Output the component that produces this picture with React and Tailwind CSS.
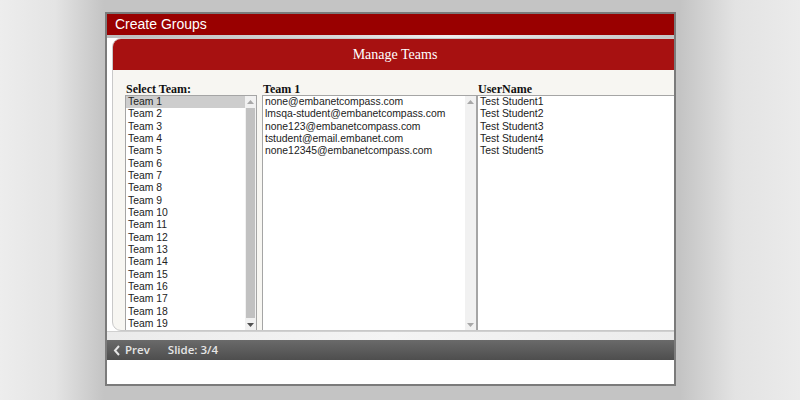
import React from "react";

const teams = Array.from({ length: 19 }, (_, i) => `Team ${i + 1}`);
const emails = [
    "none@embanetcompass.com",
    "lmsqa-student@embanetcompass.com",
    "none123@embanetcompass.com",
    "tstudent@email.embanet.com",
    "none12345@embanetcompass.com",
];
const students = ["Test Student1", "Test Student2", "Test Student3", "Test Student4", "Test Student5"];

const Arrow = ({ up, color }) => (
    <svg width="7" height="4" viewBox="0 0 7 4">
        {up ? <polygon points="0,4 7,4 3.5,0" fill={color} /> : <polygon points="0,0 7,0 3.5,4" fill={color} />}
    </svg>
);

const ScrollBar = ({ thumb }) => (
    <div className="w-[11px] shrink-0 flex flex-col bg-[#f1f1f1]">
        <div className="h-[11px] flex items-center justify-center">
            <Arrow up color="#a8a8a8" />
        </div>
        <div className="flex-1 px-[1px] py-[1px]">
            {thumb && <div className="h-[210px] bg-[#c1c1c1]"></div>}
        </div>
        <div className="h-[11px] flex items-center justify-center">
            <Arrow color={thumb ? "#505050" : "#a8a8a8"} />
        </div>
    </div>
);

const Row = ({ text, selected }) => (
    <div className={`h-[12.33px] leading-[12.33px] pl-[2px] whitespace-nowrap ${selected ? "bg-[#cdcdcd]" : ""}`}>
        {text}
    </div>
);

const Label = ({ children }) => (
    <div className="h-[25px] flex items-end pl-[1px] text-[12px] leading-[12px] font-bold text-[#111] font-['Liberation_Serif',serif]">
        {children}
    </div>
);

export default function App() {
    return (
        <div className="w-[800px] h-[400px] overflow-hidden pt-[12px] pl-[105px] bg-[linear-gradient(to_right,#ededed_0px,#e4e4e4_55px,#c4c4c4_104px,#c4c4c4_680px,#e3e3e3_735px,#ebebeb_800px)]">
            <div className="w-[571px] h-[374px] border-2 border-[#7b7b7b] bg-white flex flex-col overflow-hidden">
                <div className="h-[21px] shrink-0 bg-[#990000] pl-[8px] text-white text-[14px] leading-[21px] font-['Liberation_Sans',Arial,sans-serif]">
                    Create Groups
                </div>
                <div className="h-[3px] shrink-0 bg-[linear-gradient(to_right,#bdbdbd,#d8d8d8_40%,#eeeeee_60%,#c4c4c4)]"></div>
                <div className="h-[293px] shrink-0 bg-white">
                    <div className="ml-[5px] w-[566px] h-[293px] rounded-l-[9px] border border-[#c9c9c9] bg-[#f7f6f2] overflow-hidden flex flex-col">
                        <div className="h-[31px] shrink-0 bg-[#a71111] flex items-center justify-center text-white text-[14px] font-['Liberation_Serif',serif]">
                            Manage Teams
                        </div>
                        <div className="flex-1 flex pl-[12px] font-['Liberation_Sans',Arial,sans-serif] text-[10.4px] text-[#222]">
                            <div className="w-[132px] shrink-0 flex flex-col">
                                <Label>Select Team:</Label>
                                <div className="flex-1 flex border border-[#a5a5a5] bg-white">
                                    <div className="flex-1 overflow-hidden">
                                        {teams.map((t, i) => (
                                            <Row key={t} text={t} selected={i === 0} />
                                        ))}
                                    </div>
                                    <ScrollBar thumb />
                                </div>
                            </div>
                            <div className="w-[215px] shrink-0 ml-[5px] flex flex-col">
                                <Label>Team 1</Label>
                                <div className="flex-1 flex border border-[#a5a5a5] bg-white">
                                    <div className="flex-1 overflow-hidden">
                                        {emails.map((t) => (
                                            <Row key={t} text={t} />
                                        ))}
                                    </div>
                                    <ScrollBar />
                                </div>
                            </div>
                            <div className="w-[210px] shrink-0 flex flex-col">
                                <Label>UserName</Label>
                                <div className="flex-1 border border-[#a5a5a5] bg-white">
                                    {students.map((t) => (
                                        <Row key={t} text={t} />
                                    ))}
                                </div>
                            </div>
                        </div>
                    </div>
                </div>
                <div className="h-[9px] shrink-0 border-t border-[#d0d0d0] bg-[linear-gradient(to_right,#ebebeb,#f4f4f4_50%,#ececec)]"></div>
                <div className="h-[20px] shrink-0 bg-[linear-gradient(to_bottom,#6a6a6a,#4e4e4e)] flex items-center pl-[6px] text-[#e6e6e6] text-[11.5px] font-semibold font-['Open_Sans',sans-serif]">
                    <svg width="8" height="11" viewBox="0 0 8 11" className="mr-[4px]">
                        <polyline points="6,1 2,5.5 6,10" fill="none" stroke="#e6e6e6" strokeWidth="2" />
                    </svg>
                    <span>Prev</span>
                    <span className="ml-[18px]">Slide: 3/4</span>
                </div>
                <div className="flex-1 bg-white"></div>
            </div>
        </div>
    );
}
